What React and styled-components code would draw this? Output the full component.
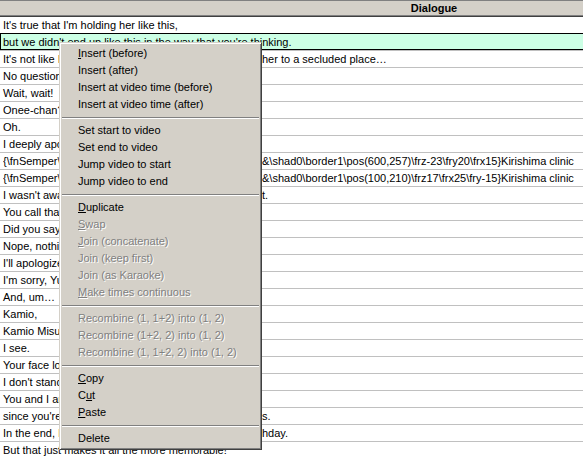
import React from 'react';
import styled, { createGlobalStyle } from 'styled-components';

const GlobalStyle = createGlobalStyle`
  html, body {
    margin: 0;
    padding: 0;
    background: #fff;
    overflow: hidden;
  }
  body {
    font-family: "Liberation Sans", Arial, sans-serif;
    font-size: 11px;
    color: #000;
  }
`;

const Page = styled.div`
  position: relative;
  width: 583px;
  height: 458px;
  overflow: hidden;
  background: #fff;
`;

const Grid = styled.div`
  width: 868px;
`;

const HeaderCell = styled.div`
  height: 15px;
  line-height: 15px;
  background: #d4d0c8;
  border-top: 1px solid #808080;
  border-bottom: 1px solid #404040;
  box-shadow: inset 0 -1px 0 #808080;
  text-align: center;
  font-weight: bold;
`;

const Row = styled.div`
  height: 16px;
  line-height: 16px;
  padding-left: 3px;
  border-bottom: 1px solid #c0c0c0;
  white-space: nowrap;
  overflow: hidden;
  background: ${p => (p.$selected ? '#ccffe5' : '#fff')};
  box-shadow: ${p =>
    p.$selected
      ? '0 -1px 0 #000, inset 1px 0 0 #000, inset 0 -1px 0 #000'
      : 'none'};
`;

/* part of a line that sits under the popup menu */
const Covered = styled.span`
  display: inline-block;
  vertical-align: top;
  width: ${p => p.$w}px;
  overflow: hidden;
`;

const Menu = styled.div`
  position: absolute;
  left: 59px;
  top: 42px;
  width: 203px;
  box-sizing: border-box;
  padding: 2px;
  background: #d4d0c8;
  border: 1px solid;
  border-color: #d4d0c8 #404040 #404040 #d4d0c8;
  box-shadow: inset 1px 1px 0 #fff, inset -1px -1px 0 #808080;
`;

const Item = styled.div`
  height: 17px;
  line-height: 17px;
  padding-left: 16px;
  white-space: nowrap;
  color: ${p => (p.$disabled ? '#808080' : '#000')};
  text-shadow: ${p => (p.$disabled ? '1px 1px 0 #fff' : 'none')};
`;

const Separator = styled.div`
  margin: 4px 0 3px;
  height: 0;
  border-top: 1px solid #808080;
  border-bottom: 1px solid #fff;
`;

const lines = [
  "It's true that I'm holding her like this,",
  "but we didn't end up like this in the way that you're thinking.",
  ["It's not like I was planning something weird by taking ", 'her to a secluded place…'],
  'No questions asked, okay?',
  'Wait, wait!',
  'Onee-chan?',
  'Oh.',
  'I deeply apologize for the misunderstanding.',
  ['{\\fnSemper\\fs40\\b1\\fsp1\\c&H000000&\\3c&HFFFFFF', '&\\shad0\\border1\\pos(600,257)\\frz-23\\fry20\\frx15}Kirishima clinic'],
  ['{\\fnSemper\\fs40\\b1\\fsp1\\c&H000000&\\3c&HFFFFFF', '&\\shad0\\border1\\pos(100,210)\\frz17\\frx25\\fry-15}Kirishima clinic'],
  ["I wasn't aware you were close. Sorry to interrup", 't.'],
  'You call that an explanation?',
  'Did you say something?',
  'Nope, nothing at all.',
  "I'll apologize properly later.",
  "I'm sorry, Yukito-san.",
  'And, um…',
  'Kamio,',
  'Kamio Misuzu.',
  'I see.',
  'Your face looks kind of red.',
  "I don't stand a chance, do I?",
  'You and I are friends now.',
  ["since you're not getting presents from your parent", 's.'],
  ["In the end, I'm the one who remembers your birt", 'hday.'],
  'But that just makes it all the more memorable!',
];

const menu = [
  [<><u>I</u>nsert (before)</>],
  ['Insert (after)'],
  ['Insert at video time (before)'],
  ['Insert at video time (after)'],
  '-',
  ['Set start to video'],
  ['Set end to video'],
  ['Jump video to start'],
  ['Jump video to end'],
  '-',
  [<><u>D</u>uplicate</>],
  [<><u>S</u>wap</>, true],
  [<><u>J</u>oin (concatenate)</>, true],
  ['Join (keep first)', true],
  ['Join (as Karaoke)', true],
  [<><u>M</u>ake times continuous</>, true],
  '-',
  ['Recombine (1, 1+2) into (1, 2)', true],
  ['Recombine (1+2, 2) into (1, 2)', true],
  ['Recombine (1, 1+2, 2) into (1, 2)', true],
  '-',
  [<><u>C</u>opy</>],
  [<>C<u>u</u>t</>],
  [<><u>P</u>aste</>],
  '-',
  ['Delete'],
];

const App = () => {
  return (
    <Page>
      <GlobalStyle />
      <Grid>
        <HeaderCell>Dialogue</HeaderCell>
        {lines.map((t, i) => (
          <Row key={i} $selected={i === 1}>
            {Array.isArray(t) ? (
              <>
                <Covered $w={259}>{t[0]}</Covered>
                {t[1]}
              </>
            ) : (
              t
            )}
          </Row>
        ))}
      </Grid>
      <Menu>
        {menu.map((m, i) =>
          m === '-' ? (
            <Separator key={i} />
          ) : (
            <Item key={i} $disabled={m[1]}>{m[0]}</Item>
          )
        )}
      </Menu>
    </Page>
  );
};

export default App;
